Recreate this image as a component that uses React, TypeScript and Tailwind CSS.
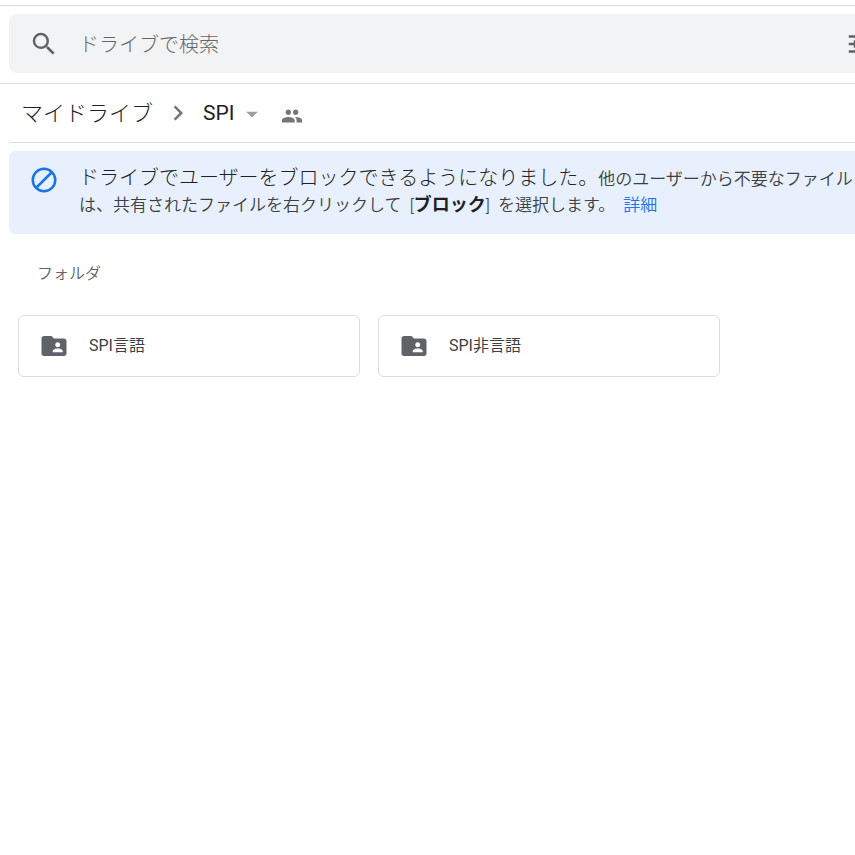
import { useState } from 'react';
import {
  MdArrowDropDown,
  MdChevronRight,
  MdFolderShared,
  MdPeople,
  MdSearch,
  MdTune,
} from 'react-icons/md';

interface Folder {
  id: string;
  name: string;
}

const folders: Folder[] = [
  { id: 'verbal', name: 'SPI言語' },
  { id: 'nonverbal', name: 'SPI非言語' },
];

function SearchBar() {
  const [query, setQuery] = useState('');

  return (
    <form
      role="search"
      onSubmit={(e) => e.preventDefault()}
      className="-mr-5 ml-[9px] flex h-[59px] items-center rounded-lg bg-[#f1f3f4] pl-5 text-[#5f6368]"
    >
      <button type="submit" aria-label="検索" className="shrink-0">
        <MdSearch size={30} />
      </button>
      <input
        type="text"
        aria-label="ドライブで検索"
        placeholder="ドライブで検索"
        value={query}
        onChange={(e) => setQuery(e.target.value)}
        className="ml-5 min-w-0 flex-1 bg-transparent pt-0.5 text-[20px] font-light outline-none placeholder:text-[#666666]"
      />
      <button type="button" aria-label="検索オプション" className="shrink-0">
        <MdTune size={30} />
      </button>
    </form>
  );
}

function Breadcrumb() {
  return (
    <nav aria-label="パンくずリスト" className="ml-[9px] flex h-[59px] items-center border-b border-[#dadce0] pl-3">
      <a href="#my-drive" className="text-[22px] font-light text-[#202124]">
        マイドライブ
      </a>
      <MdChevronRight size={30} className="ml-2.5 text-[#757575]" />
      <button type="button" className="ml-2.5 flex items-center pt-0.5 text-[21px] text-[#202124]">
        SPI
        <MdArrowDropDown size={28} className="ml-1 text-[#9e9e9e]" />
      </button>
      <button type="button" aria-label="共有相手" className="ml-[15px] pt-1.5">
        <MdPeople size={22} className="text-[#757575]" />
      </button>
    </nav>
  );
}

function BlockIcon() {
  return (
    <svg width="30" height="30" viewBox="0 0 24 24" fill="none" stroke="#1a73e8" strokeWidth="2" className="shrink-0">
      <circle cx="12" cy="12" r="9" />
      <path d="M5.6 18.4 18.4 5.6" />
    </svg>
  );
}

function Notice() {
  return (
    <section className="mt-2 ml-[9px] flex h-[83px] items-start overflow-hidden rounded-l-md bg-[#e8f0fe] pt-3.5 pl-5 font-[350] whitespace-nowrap text-[#3c4043]">
      <BlockIcon />
      <div className="ml-5 text-[17px] leading-[26px]">
        <p>
          <span className="text-[20px] font-light text-[#202124]">ドライブでユーザーをブロックできるようになりました。</span>
          他のユーザーから不要なファイル
        </p>
        <p>
          は、共有されたファイルを右クリックして{' '}
          <span className="px-1">
            [<b className="text-[18px] font-bold text-[#202124]">ブロック</b>]
          </span>{' '}
          を選択します。
          <a href="#details" className="ml-2 text-[#1a73e8]">
            詳細
          </a>
        </p>
      </div>
    </section>
  );
}

export default function App() {
  return (
    <div className="min-h-screen overflow-x-hidden bg-white pt-[5px] font-['Roboto','Noto_Sans_CJK_JP',sans-serif]">
      <header className="border-y border-[#dadce0] pt-2 pb-2.5">
        <SearchBar />
      </header>
      <Breadcrumb />
      <Notice />
      <main className="px-[18px]">
        <h2 className="mt-7 pl-[19px] text-[16px] leading-6 font-[350] text-[#5f6368]">フォルダ</h2>
        <ul className="mt-[29px] flex flex-wrap gap-[18px]">
          {folders.map((folder) => (
            <li key={folder.id} className="w-[342px] max-w-full">
              <button
                type="button"
                className="flex h-[62px] w-full items-center gap-5 rounded-md border border-[#dadce0] pl-5 text-left text-[16px]"
              >
                <MdFolderShared size={30} className="text-[#5f6368]" />
                <span className="text-[#3c4043]">{folder.name}</span>
              </button>
            </li>
          ))}
        </ul>
      </main>
    </div>
  );
}
